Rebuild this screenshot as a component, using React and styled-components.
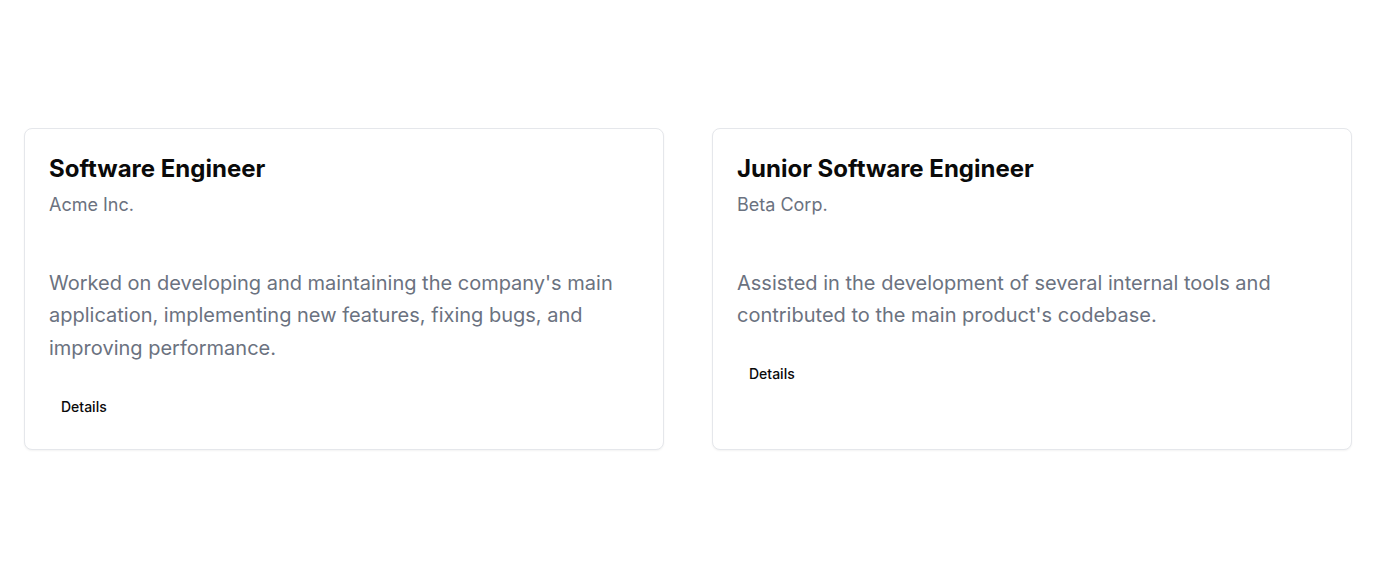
import React from 'react'
import styled, {createGlobalStyle} from 'styled-components'

const GlobalStyle = createGlobalStyle`
  html, body {
    margin: 0;
    padding: 0;
    background: #ffffff;
  }
  body {
    font-family: Inter, "Noto Sans", sans-serif;
    -webkit-font-smoothing: antialiased;
  }
  * {
    box-sizing: border-box;
  }
`

const Page = styled.main`
  min-height: 578px;
  display: flex;
  align-items: center;
  padding: 0 24px;
`

const Grid = styled.div`
  width: 100%;
  display: grid;
  grid-template-columns: 1fr 1fr;
  gap: 48px;
`

const Card = styled.section`
  display: flex;
  flex-direction: column;
  background: #ffffff;
  border: 1px solid #e5e7eb;
  border-radius: 8px;
  box-shadow: 0 1px 2px rgba(0, 0, 0, 0.05);
`

const Header = styled.header`
  display: flex;
  flex-direction: column;
  gap: 6px;
  padding: 24px 24px 24px;
`

const Title = styled.h3`
  margin: 0;
  font-size: 24px;
  line-height: 32px;
  font-weight: 700;
  color: #0a0a0a;
`

const Company = styled.p`
  margin: 0;
  font-size: 18px;
  line-height: 28px;
  color: #6b7280;
`

const Content = styled.div`
  padding: 24px 24px 25px;
  display: flex;
  flex-direction: column;
  align-items: flex-start;
  gap: 24px;
`

const Summary = styled.p`
  margin: 0;
  font-size: 20px;
  line-height: 32.5px;
  color: #6b7280;
`

const DetailsButton = styled.button`
  height: 36px;
  padding: 0 12px;
  border: none;
  border-radius: 6px;
  background: transparent;
  font-family: inherit;
  font-size: 14px;
  font-weight: 500;
  color: #0a0a0a;
  cursor: pointer;

  &:hover {
    background: #f4f4f5;
  }
`

const jobs = [
  {
    id: 1,
    title: 'Software Engineer',
    company: 'Acme Inc.',
    summary:
      "Worked on developing and maintaining the company's main application, implementing new features, fixing bugs, and improving performance.",
  },
  {
    id: 2,
    title: 'Junior Software Engineer',
    company: 'Beta Corp.',
    summary:
      "Assisted in the development of several internal tools and contributed to the main product's codebase.",
  },
]

const App = () => (
  <>
    <GlobalStyle />
    <Page>
      <Grid>
        {jobs.map(job => (
          <Card key={job.id}>
            <Header>
              <Title>{job.title}</Title>
              <Company>{job.company}</Company>
            </Header>
            <Content>
              <Summary>{job.summary}</Summary>
              <DetailsButton type="button">Details</DetailsButton>
            </Content>
          </Card>
        ))}
      </Grid>
    </Page>
  </>
)

export default App
